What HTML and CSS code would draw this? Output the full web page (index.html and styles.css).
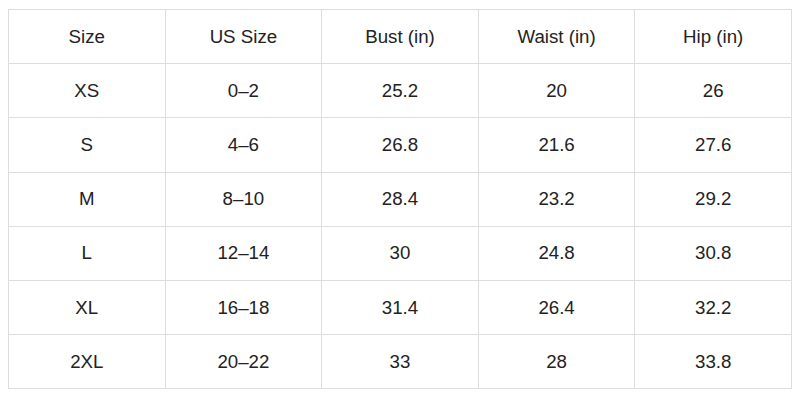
FILE: index.html
```html
<!DOCTYPE html>
<html>
<head>
<meta charset="utf-8">
<link rel="stylesheet" href="styles.css">
</head>
<body>
<table class="size-table">
  <tr><td>Size</td><td>US Size</td><td>Bust (in)</td><td>Waist (in)</td><td>Hip (in)</td></tr>
  <tr><td>XS</td><td>0–2</td><td>25.2</td><td>20</td><td>26</td></tr>
  <tr><td>S</td><td>4–6</td><td>26.8</td><td>21.6</td><td>27.6</td></tr>
  <tr><td>M</td><td>8–10</td><td>28.4</td><td>23.2</td><td>29.2</td></tr>
  <tr><td>L</td><td>12–14</td><td>30</td><td>24.8</td><td>30.8</td></tr>
  <tr><td>XL</td><td>16–18</td><td>31.4</td><td>26.4</td><td>32.2</td></tr>
  <tr><td>2XL</td><td>20–22</td><td>33</td><td>28</td><td>33.8</td></tr>
</table>
</body>
</html>
```
FILE: styles.css
```css
body {
  margin: 8px;
  background: #fff;
  font-family: "Liberation Sans", Arial, sans-serif;
}
.size-table {
  margin-top: 1px;
  width: 784px;
  border-collapse: collapse;
  table-layout: fixed;
}
.size-table td {
  border: 1px solid #dddddd;
  height: 53.2px;
  padding: 0;
  text-align: center;
  vertical-align: middle;
  font-size: 18.7px;
  color: #222;
}
```
